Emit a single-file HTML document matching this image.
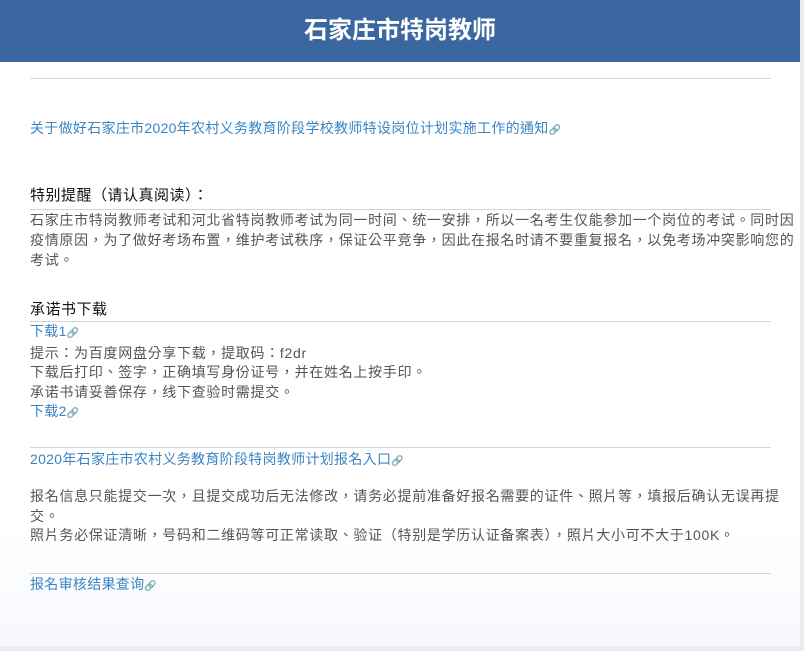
<!DOCTYPE html>
<html><head><meta charset="utf-8"><style>
body{margin:0;width:804px;height:651px;background:#e9ecf2;font-family:"Liberation Sans","Noto Sans CJK TC",sans-serif;overflow:hidden;position:relative}
.hd{position:absolute;left:0;top:0;width:800px;height:62px;background:#3a67a0;color:#fff;font-size:24px;font-weight:bold;text-align:center;line-height:62px}
.pn{position:absolute;left:0;top:62px;width:800px;height:584px;background:linear-gradient(#fff 80%,#f6f8fc)}
.t{position:absolute;left:30px;font-size:14px;color:#555;white-space:nowrap;letter-spacing:0.7px}
.t a{letter-spacing:0.3px}
a{color:#3a84c4;text-decoration:none}
.i{font-size:10px}
.hr{position:absolute;left:30px;width:741px;height:1px;background:#d4d4d4}
.h{position:absolute;left:30px;font-size:15px;color:#111;letter-spacing:0.5px}
</style></head><body>
<div class="hd">石家庄市特岗教师</div>
<div class="pn"></div>
<div class="hr" style="top:78px"></div>
<div class="t" style="top:118px"><a>关于做好石家庄市2020年农村义务教育阶段学校教师特设岗位计划实施工作的通知<span class="i">🔗</span></a></div>
<div class="h" style="top:184px">特别提醒（请认真阅读）：</div>
<div class="hr" style="top:209px"></div>
<div class="t" style="top:210px;line-height:20px;white-space:normal;width:772px">石家庄市特岗教师考试和河北省特岗教师考试为同一时间、统一安排，所以一名考生仅能参加一个岗位的考试。同时因疫情原因，为了做好考场布置，维护考试秩序，保证公平竞争，因此在报名时请不要重复报名，以免考场冲突影响您的考试。</div>
<div class="h" style="top:298px">承诺书下载</div>
<div class="hr" style="top:321px"></div>
<div class="t" style="top:322px;line-height:19.5px"><a>下载1<span class="i">🔗</span></a><br>提示：为百度网盘分享下载，提取码：f2dr<br>下载后打印、签字，正确填写身份证号，并在姓名上按手印。<br>承诺书请妥善保存，线下查验时需提交。<br><a>下载2<span class="i">🔗</span></a></div>
<div class="hr" style="top:447px"></div>
<div class="t" style="top:449px"><a>2020年石家庄市农村义务教育阶段特岗教师计划报名入口<span class="i">🔗</span></a></div>
<div class="t" style="top:487px;line-height:19.5px;white-space:normal;width:762px">报名信息只能提交一次，且提交成功后无法修改，请务必提前准备好报名需要的证件、照片等，填报后确认无误再提交。<br>照片务必保证清晰，号码和二维码等可正常读取、验证（特别是学历认证备案表），照片大小可不大于100K。</div>
<div class="hr" style="top:573px"></div>
<div class="t" style="top:574px"><a>报名审核结果查询<span class="i">🔗</span></a></div>
</body></html>
